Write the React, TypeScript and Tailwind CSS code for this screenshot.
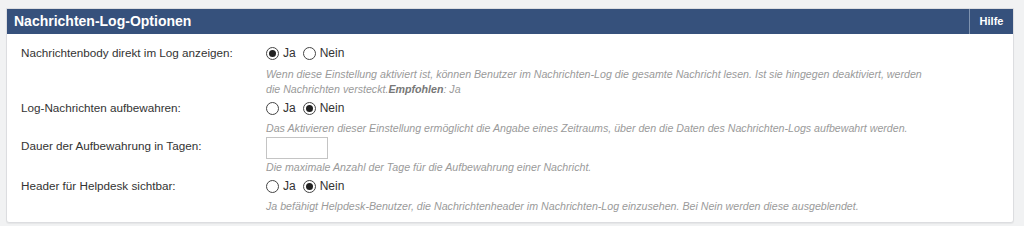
import React from 'react'

function Radio({ label, checked }: { label: string; checked: boolean }) {
  return (
    <label className="flex items-center gap-[4px] mr-[7px]">
      <span className="flex h-[13px] w-[13px] items-center justify-center rounded-full border border-[#444] bg-white">
        {checked && <span className="h-[7px] w-[7px] rounded-full bg-[#222]" />}
      </span>
      <span>{label}</span>
    </label>
  )
}

function YesNo({ value }: { value: boolean }) {
  return (
    <div className="flex h-[20px] items-center text-[12px]">
      <Radio label="Ja" checked={value} />
      <Radio label="Nein" checked={!value} />
    </div>
  )
}

function Row({
  label,
  children,
  help,
  helpGap = 'mt-[3px]',
}: {
  label: string
  children: React.ReactNode
  help: React.ReactNode
  helpGap?: string
}) {
  return (
    <div className="flex">
      <div className="flex h-[20px] w-[245px] shrink-0 items-center">{label}</div>
      <div className="flex-1">
        {children}
        <div className={`${helpGap} text-[10.65px] italic leading-[15px] text-[#9a9a9a]`}>{help}</div>
      </div>
    </div>
  )
}

export default function App() {
  return (
    <div
      className="h-[226px] w-[1024px] bg-[#f1f2f3] pt-[8px] pl-[6px] text-[11.7px] text-[#333]"
      style={{ fontFamily: '"Liberation Sans", Arial, sans-serif' }}
    >
      <div className="w-[1008px] rounded-b-[3px] border border-[#dcdde0] bg-white shadow-[0_1px_1px_rgba(0,0,0,0.05)]">
        <div className="flex h-[25px] items-stretch bg-[#36517c] text-white">
          <div className="flex flex-1 items-center pl-[7px] text-[14px] font-bold">Nachrichten-Log-Optionen</div>
          <div className="flex w-[44px] items-center justify-center border-l border-[#7f93b0] text-[11px] font-bold">
            Hilfe
          </div>
        </div>
        <div className="px-[14px] pt-[9px] pb-[8px]">
          <div className="mb-[1px]">
            <Row
              label="Nachrichtenbody direkt im Log anzeigen:"
              helpGap="mt-[4px]"
              help={
                <>
                  Wenn diese Einstellung aktiviert ist, können Benutzer im Nachrichten-Log die gesamte Nachricht lesen. Ist
                  sie hingegen deaktiviert, werden
                  <br />
                  die Nachrichten versteckt.<span className="font-bold text-[#777]">Empfohlen</span>: Ja
                </>
              }
            >
              <YesNo value={true} />
            </Row>
          </div>
          <div className="mb-[1px]">
            <Row
              label="Log-Nachrichten aufbewahren:"
              help="Das Aktivieren dieser Einstellung ermöglicht die Angabe eines Zeitraums, über den die Daten des Nachrichten-Logs aufbewahrt werden."
            >
              <YesNo value={false} />
            </Row>
          </div>
          <div className="mb-[1px]">
            <div className="flex">
              <div className="flex h-[17px] w-[245px] shrink-0 items-center">Dauer der Aufbewahrung in Tagen:</div>
              <div className="flex-1">
                <input
                  type="text"
                  className="block h-[22px] w-[62px] border border-[#c4c4c4] bg-white px-[3px] outline-none"
                />
                <div className="mt-[1px] text-[10.65px] italic leading-[15px] text-[#9a9a9a]">
                  Die maximale Anzahl der Tage für die Aufbewahrung einer Nachricht.
                </div>
              </div>
            </div>
          </div>
          <Row
            label="Header für Helpdesk sichtbar:"
            help="Ja befähigt Helpdesk-Benutzer, die Nachrichtenheader im Nachrichten-Log einzusehen. Bei Nein werden diese ausgeblendet."
          >
            <YesNo value={false} />
          </Row>
        </div>
      </div>
    </div>
  )
}
